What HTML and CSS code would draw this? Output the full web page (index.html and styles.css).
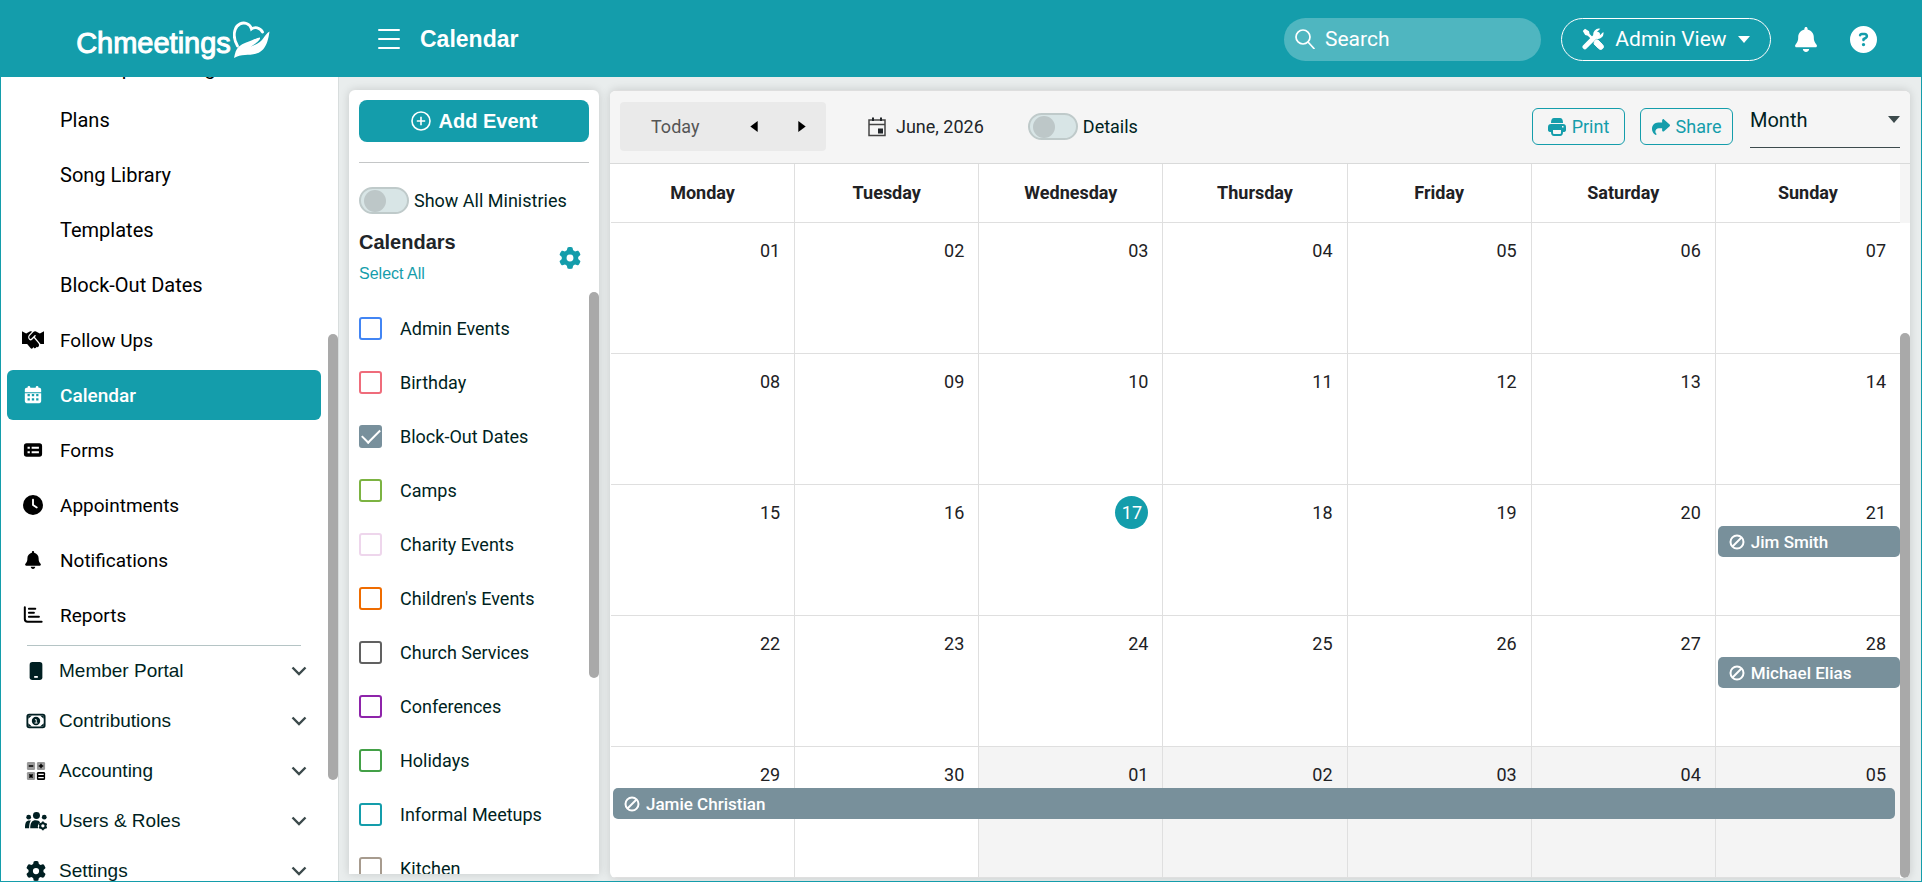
FILE: index.html
```html
<!DOCTYPE html>
<html lang="en">
  <head>
    <meta charset="UTF-8" />
    <meta name="viewport" content="width=device-width, initial-scale=1.0" />
    <title>Calendar - Chmeetings</title>
    <link rel="stylesheet" href="styles.css">
  </head>
  <body>
    <!-- Shared icons -->
    <svg class="sprite" aria-hidden="true">
      <symbol id="i-gear" viewBox="0 0 512 512"><path d="M495.9 166.6c3.2 8.7 .5 18.4-6.4 24.6l-43.3 39.4c1.1 8.3 1.7 16.8 1.7 25.4s-.6 17.1-1.7 25.4l43.3 39.4c6.9 6.2 9.6 15.9 6.4 24.6c-4.4 11.9-9.7 23.3-15.8 34.3l-4.7 8.1c-6.6 11-14 21.4-22.1 31.2c-5.9 7.2-15.7 9.6-24.5 6.8l-55.7-17.7c-13.4 10.3-28.2 18.9-44 25.4l-12.5 57.1c-2 9.1-9 16.3-18.2 17.8c-13.8 2.3-28 3.5-42.5 3.5s-28.7-1.2-42.5-3.5c-9.2-1.5-16.2-8.7-18.2-17.8l-12.5-57.1c-15.8-6.5-30.6-15.1-44-25.4L83.1 425.9c-8.8 2.8-18.6 .3-24.5-6.8c-8.1-9.8-15.5-20.2-22.1-31.2l-4.7-8.1c-6.1-11-11.4-22.4-15.8-34.3c-3.2-8.7-.5-18.4 6.4-24.6l43.3-39.4C64.6 273.1 64 264.6 64 256s.6-17.1 1.7-25.4L22.4 191.2c-6.9-6.2-9.6-15.9-6.4-24.6c4.4-11.9 9.7-23.3 15.8-34.3l4.7-8.1c6.6-11 14-21.4 22.1-31.2c5.9-7.2 15.7-9.6 24.5-6.8l55.7 17.7c13.4-10.3 28.2-18.9 44-25.4l12.5-57.1c2-9.1 9-16.3 18.2-17.8C227.3 1.2 241.5 0 256 0s28.7 1.2 42.5 3.5c9.2 1.5 16.2 8.7 18.2 17.8l12.5 57.1c15.8 6.5 30.6 15.1 44 25.4l55.7-17.7c8.8-2.8 18.6-.3 24.5 6.8c8.1 9.8 15.5 20.2 22.1 31.2l4.7 8.1c6.1 11 11.4 22.4 15.8 34.3zM256 336a80 80 0 1 0 0-160 80 80 0 1 0 0 160z"/></symbol>
      <symbol id="i-bell" viewBox="0 0 448 512"><path d="M224 0c-17.7 0-32 14.3-32 32V51.2C119 66 64 130.6 64 208v18.8c0 47-17.3 92.4-48.5 127.6l-7.4 8.3c-8.4 9.4-10.4 22.9-5.3 34.4S19.4 416 32 416H416c12.6 0 24-7.4 29.2-18.9s3.1-25-5.3-34.4l-7.4-8.3C401.3 319.2 384 273.9 384 226.8V208c0-77.4-55-142-128-156.8V32c0-17.7-14.3-32-32-32zm45.3 493.3c12-12 18.7-28.3 18.7-45.3H224 160c0 17 6.7 33.3 18.7 45.3s28.3 18.7 45.3 18.7s33.3-6.7 45.3-18.7z"/></symbol>
      <symbol id="i-chevron" viewBox="0 0 16 10"><path d="M1.5 1.5 8 8l6.5-6.5" fill="none" stroke="currentColor" stroke-width="2.4"/></symbol>
      <symbol id="i-caret" viewBox="0 0 12 7"><path d="M0 0h12L6 7z"/></symbol>
      <symbol id="i-block" viewBox="0 0 16 16"><g fill="none" stroke="currentColor" stroke-width="2"><circle cx="8" cy="8" r="6.5"/><path d="M3.5 12.5l9-9"/></g></symbol>
    </svg>

    <div class="app">
      <header class="topbar">
        <a class="brand" href="#">
          <span class="brand-name">Chmeetings</span>
          <svg class="brand-heart" viewBox="0 0 37 37">
            <path d="M4.5 25C1 19 .5 13.500 2.200 8.500 4 3 9.500 1 13.500 2.500c3 1.200 4.500 3.500 5 5.500 3-2.300 8.500-2 11 3" fill="none" stroke="currentColor" stroke-width="2.800" stroke-linecap="round"/>
            <path d="M36.500 10.500c-1 7-2.500 13.500-6.500 18-5 5.500-12 5-18 5.500-4 .3-7.500 1-11 3 1-5 2-9 5-11.500 4-3.500 9-4.500 13-6.200 3.500-1.500 7-3 8-2.800.8 2-4.500 6.500-9.500 9.300 6-2.300 11-5.300 13-8.800 1.500-2.500 3.500-5 6-6.500z"/>
          </svg>
        </a>
        <button class="icon-btn menu-btn" aria-label="Toggle menu">
          <svg viewBox="0 0 22 22"><path d="M1 2h20M1 11h20M1 20h20" stroke="currentColor" stroke-width="2" stroke-linecap="round"/></svg>
        </button>
        <h1>Calendar</h1>
        <div class="search">
          <svg viewBox="0 0 20 20"><g fill="none" stroke="currentColor" stroke-width="1.700"><circle cx="8" cy="8" r="7"/><path d="M13 13l6 6.500" stroke-linecap="round"/></g></svg>
          <input type="text" placeholder="Search" aria-label="Search" />
        </div>
        <button class="view-btn">
          <svg class="tools" viewBox="0 0 22 22">
            <path d="M.8 3 3 .8l4 2.500.6 2.700 3 3-1.800 1.800-3-3L3.200 7z"/>
            <path d="M12.300 13.500l1.500-1.700 2.200.3 4.600 4.600a2.700 2.700 0 0 1-3.900 3.900l-4.600-4.600z" stroke="currentColor"/>
            <path d="M2.900 18.900 15.500 6.300" stroke="currentColor" stroke-width="4.800" stroke-linecap="round"/>
            <path d="M18.300.8a5.600 5.600 0 0 0-6.700 7.300l2.700 2.600a5.600 5.600 0 0 0 7-6.800l-3.400 3.300-2.500-.6-.6-2.500z"/>
          </svg>
          Admin View
          <svg class="caret"><use href="#i-caret"/></svg>
        </button>
        <button class="icon-btn bell-btn" aria-label="Notifications"><svg><use href="#i-bell"/></svg></button>
        <button class="icon-btn help-btn" aria-label="Help">
          <svg viewBox="0 0 512 512"><path d="M256 512A256 256 0 1 0 256 0a256 256 0 1 0 0 512zM169.800 165.300c7.900-22.300 29.100-37.300 52.800-37.300h58.300c34.900 0 63.100 28.300 63.100 63.100c0 22.600-12.100 43.500-31.700 54.800L280 264.400c-.2 13-10.900 23.600-24 23.600c-13.300 0-24-10.700-24-24V250.500c0-8.600 4.600-16.500 12.100-20.800l44.300-25.400c4.700-2.700 7.600-7.700 7.600-13.100c0-8.400-6.800-15.100-15.100-15.100H222.600c-3.400 0-6.400 2.100-7.500 5.300l-.4 1.200c-4.400 12.500-18.200 19-30.600 14.600s-19-18.200-14.600-30.600l.4-1.200zM224 352a32 32 0 1 1 64 0 32 32 0 1 1 -64 0z"/></svg>
        </button>
      </header>

      <div class="layout">
        <aside class="sidebar">
          <nav class="side-scroll">
            <div class="side-list">
              <a class="side-item side-sub" href="#"><span class="side-icon"></span>Worship Planning</a>
              <a class="side-item side-sub" href="#"><span class="side-icon"></span>Plans</a>
              <a class="side-item side-sub" href="#"><span class="side-icon"></span>Song Library</a>
              <a class="side-item side-sub" href="#"><span class="side-icon"></span>Templates</a>
              <a class="side-item side-sub" href="#"><span class="side-icon"></span>Block-Out Dates</a>
              <a class="side-item" href="#">
                <svg class="side-icon small" viewBox="0 56 640 400" preserveAspectRatio="none"><path d="M323.400 85.200l-96.800 78.400c-16.100 13-19.200 36.400-7 53.100c12.900 17.800 38 21.300 55.300 7.800l99.300-77.200c7-5.400 17-4.200 22.500 2.800s4.200 17-2.800 22.500l-20.900 16.200L540 345H640V64L520 112 434.800 79c-15.300-9.800-33.200-15-51.400-15c-21.800 0-43 7.500-60 21.200zm22.800 124.400l-51.700 40.200C263 274.300 217.300 268 193.700 235.600c-22.200-30.500-16.600-73.100 12.700-96.800l83.200-67.300c-11.600-4.900-24.100-7.400-36.800-7.400C234 64 215.700 69.600 200 80L120 112 0 64V345H150l97.600 90.400c19.600 17.900 49.900 16.500 67.800-3.100c5.500-6.100 9.200-13.200 11.100-20.600l17 15.600c19.500 17.900 49.900 16.600 67.800-2.900c4.500-4.900 7.800-10.600 9.900-16.500c19.400 13 45.800 10.300 62.100-7.500c17.900-19.500 16.600-49.900-2.900-67.800z"/></svg>
                Follow Ups
              </a>
              <a class="side-item active" href="#">
                <svg class="side-icon" viewBox="0 0 22 22"><path fill-rule="evenodd" d="M5 3V2.500a1.500 1.500 0 0 1 3 0V3h6v-.5a1.500 1.500 0 0 1 3 0V3h1a2 2 0 0 1 2 2v3H2V5a2 2 0 0 1 2-2zM2 9h18v9a2 2 0 0 1-2 2H4a2 2 0 0 1-2-2zm3 1v2.500h2.500V10zm4.700 0v2.500h2.600V10zm4.800 0v2.500H17V10zM5 14.500V17h2.500v-2.500zm4.700 0V17h2.600v-2.500zm4.800 0V17H17v-2.500z"/></svg>
                Calendar
              </a>
              <a class="side-item" href="#">
                <svg class="side-icon" viewBox="0 0 22 22"><rect x="1" y="3.500" width="20" height="15" rx="3"/><path d="M5 8.500h2.500M5 13.500h2.500M9.500 8.500h8M9.500 13.500h8" stroke="#fff" stroke-width="2"/></svg>
                Forms
              </a>
              <a class="side-item" href="#">
                <svg class="side-icon" viewBox="-26 0 564 512"><path d="M256 0a256 256 0 1 1 0 512A256 256 0 1 1 256 0zM232 120V256c0 8 4 15.500 10.700 20l96 64c11 7.400 25.900 4.400 33.300-6.700s4.400-25.900-6.700-33.300L280 243.200V120c0-13.300-10.700-24-24-24s-24 10.700-24 24z"/></svg>
                Appointments
              </a>
              <a class="side-item" href="#"><svg class="side-icon small"><use href="#i-bell"/></svg>Notifications</a>
              <a class="side-item" href="#">
                <svg class="side-icon" viewBox="0 0 22 22"><path d="M2 2.500v13q0 3 3 3h15.500M6.500 4h7M6.500 8.500H12M6.500 13h11" fill="none" stroke="currentColor" stroke-width="2.200" stroke-linecap="round"/></svg>
                Reports
              </a>
              <hr />
              <button class="side-group">
                <svg class="side-icon" viewBox="0 0 22 22"><rect x="4" y="1" width="14" height="20" rx="3"/><path d="M9 17.500h4" stroke="#fff" stroke-width="2"/></svg>
                <span>Member Portal</span><svg class="chevron"><use href="#i-chevron"/></svg>
              </button>
              <button class="side-group">
                <svg class="side-icon" viewBox="0 0 22 22"><rect x="1.500" y="4" width="19" height="14" rx="2" fill="none" stroke="currentColor" stroke-width="2"/><path d="M2.500 8.500V5h4zM19.500 8.500V5h-4zM2.500 13.500V17h4zM19.500 13.500V17h-4z"/><circle cx="11" cy="11" r="4.600"/><path d="M9.800 9.500h1.500V13M9.500 13.200h3.200" fill="none" stroke="#fff"/></svg>
                <span>Contributions</span><svg class="chevron"><use href="#i-chevron"/></svg>
              </button>
              <button class="side-group">
                <svg class="side-icon" viewBox="0 0 22 22">
                  <g fill="#999"><rect x="1" y="1" width="9" height="9" rx="1.500"/><rect x="12" y="1" width="9" height="9" rx="1.500"/><rect x="1" y="12" width="9" height="9" rx="1.500"/></g>
                  <rect x="12" y="12" width="9" height="9" rx="1.500" fill="#000"/>
                  <path d="M3 5.500h5M14 5.500h5M16.500 3v5M3.700 14.700l3.600 3.600M7.300 14.700l-3.600 3.600" stroke="#000" stroke-width="1.600"/>
                  <path d="M13.500 14.800h6M13.500 18.200h6" stroke="#fff" stroke-width="1.400"/>
                </svg>
                <span>Accounting</span><svg class="chevron"><use href="#i-chevron"/></svg>
              </button>
              <button class="side-group">
                <svg class="side-icon" viewBox="0 0 24 20"><circle cx="12.500" cy="4" r="3.800"/><circle cx="4" cy="5.800" r="2.600"/><circle cx="21" cy="5.800" r="2.600"/><path d="M0 18c0-6 1-8.500 5-8.500h1.500Q4.500 12 4.500 18zM5.700 18c0-6 2-8.800 6-8.800 2.500 0 4 .8 4.800 2.300-2 1.500-3 3.500-2.200 6.500z"/><circle cx="19.500" cy="15.300" r="2.900" fill="none" stroke="currentColor" stroke-width="2.200"/><path d="M19.500 10.500v2M19.500 18v2M15.300 13l1.500.9M22.200 16.700l1.500.9M15.300 17.600l1.500-.9M22.200 13.900l1.500-.9" stroke="currentColor" stroke-width="2"/></svg>
                <span>Users &amp; Roles</span><svg class="chevron"><use href="#i-chevron"/></svg>
              </button>
              <button class="side-group">
                <svg class="side-icon"><use href="#i-gear"/></svg>
                <span>Settings</span><svg class="chevron"><use href="#i-chevron"/></svg>
              </button>
            </div>
          </nav>
          <div class="rail side-rail"><div class="thumb"></div></div>
        </aside>

        <section class="filters">
          <div class="filters-top">
            <button class="add-btn">
              <svg viewBox="0 0 20 20"><g fill="none" stroke="currentColor" stroke-width="1.600"><circle cx="10" cy="10" r="9"/><path d="M10 5.800v8.400M5.800 10h8.400"/></g></svg>
              Add Event
            </button>
            <hr />
            <label class="switch-row"><input class="switch" type="checkbox" />Show All Ministries</label>
            <div class="filters-title">
              <div>
                <h2>Calendars</h2>
                <a href="#">Select All</a>
              </div>
              <button class="icon-btn gear-btn" aria-label="Calendar settings"><svg><use href="#i-gear"/></svg></button>
            </div>
          </div>
          <div class="filters-scroll">
            <ul id="calendar-list" class="calendar-list">
              <!-- Calendars will be inserted here -->
            </ul>
            <div class="rail filters-rail"><div class="thumb"></div></div>
          </div>
        </section>

        <main class="calendar">
          <div class="toolbar">
            <div class="nav-group">
              <button class="today-btn">Today</button>
              <button class="arrow-btn" aria-label="Previous"><svg viewBox="0 0 8 12"><path d="M8 0v12L0 6z"/></svg></button>
              <button class="arrow-btn" aria-label="Next"><svg viewBox="0 0 8 12"><path d="M0 0v12l8-6z"/></svg></button>
            </div>
            <button class="date-btn">
              <svg viewBox="0 0 18 20"><path d="M1 3h16v15.500H1zM1 7.500h16" fill="none" stroke="#444" stroke-width="1.500"/><path d="M4 .5h2V4H4zM12 .5h2V4h-2zM10 11.500h5v5h-5z"/></svg>
              June, 2026
            </button>
            <label class="switch-row"><input class="switch" type="checkbox" />Details</label>
            <div class="toolbar-right">
              <button class="outline-btn">
                <svg viewBox="0 0 18 18"><path d="M3 5q0-5 3-5h6q3 0 3 5z"/><path fill-rule="evenodd" d="M3 6h12q3 0 3 3v3q0 2-3 2 0 4-3 4H6q-3 0-3-4-3 0-3-2V9q0-3 3-3zm2 6v3q0 1 1 1h6q1 0 1-1v-3zm9-4v1.500h1.500V8z"/></svg>
                Print
              </button>
              <button class="outline-btn">
                <svg viewBox="0 0 512 512"><path d="M307 34.800c-11.500 5.100-19 16.600-19 29.200v64H176C78.800 128 0 206.800 0 304C0 417.300 81.500 467.900 100.200 478.100c2.500 1.400 5.300 1.900 8.100 1.900c10.900 0 19.700-8.900 19.700-19.700c0-7.500-4.300-14.400-9.800-19.500C108.800 431.900 96 414.400 96 384c0-53 43-96 96-96h96v64c0 12.600 7.400 24.100 19 29.200s25 3 34.400-5.400l160-144c6.700-6.100 10.600-14.700 10.600-23.800s-3.800-17.700-10.600-23.800l-160-144c-9.400-8.500-22.900-10.600-34.400-5.400z"/></svg>
                Share
              </button>
              <div class="view-select">
                <select aria-label="View">
                  <option>Month</option>
                  <option>Week</option>
                  <option>Day</option>
                </select>
                <svg><use href="#i-caret"/></svg>
              </div>
            </div>
          </div>
          <div class="month">
            <table>
              <thead>
                <tr>
                  <th>Monday</th>
                  <th>Tuesday</th>
                  <th>Wednesday</th>
                  <th>Thursday</th>
                  <th>Friday</th>
                  <th>Saturday</th>
                  <th>Sunday</th>
                </tr>
              </thead>
              <tbody id="month-body">
                <!-- Weeks will be inserted here -->
              </tbody>
            </table>
            <div class="rail month-rail"><div class="thumb"></div></div>
          </div>
        </main>
      </div>
    </div>

    <script>
      const calendars = [
        { name: "Admin Events", color: "#4285f4" },
        { name: "Birthday", color: "#ef6c7b" },
        { name: "Block-Out Dates", color: "#78909c", checked: true },
        { name: "Camps", color: "#7cb342" },
        { name: "Charity Events", color: "#eed6ec" },
        { name: "Children's Events", color: "#ef6c00" },
        { name: "Church Services", color: "#616161" },
        { name: "Conferences", color: "#8e24aa" },
        { name: "Holidays", color: "#43a047" },
        { name: "Informal Meetups", color: "#149dab" },
        { name: "Kitchen", color: "#a79b8e" },
      ];

      // Index is the day offset from Monday, June 1
      const events = {
        20: { title: "Jim Smith" },
        27: { title: "Michael Elias" },
        28: { title: "Jamie Christian", week: true },
      };

      const today = 17;
      const daysInMonth = 30;

      function renderCalendars() {
        document.getElementById("calendar-list").innerHTML = calendars
          .map(
            (cal) => `
          <li>
            <label style="--color: ${cal.color}">
              <input type="checkbox" ${cal.checked ? "checked" : ""} />
              ${cal.name}
            </label>
          </li>`
          )
          .join("");
      }

      function createDayCell(index) {
        const other = index >= daysInMonth;
        const day = other ? index - daysInMonth + 1 : index + 1;
        const event = events[index];
        const isToday = !other && day === today;

        return `
          <td class="${other ? "other" : ""}">
            <div class="day"><span class="${isToday ? "today" : ""}">${String(day).padStart(2, "0")}</span></div>
            ${event ? `<a href="#" class="event ${event.week ? "event-week" : ""}"><svg><use href="#i-block"/></svg>${event.title}</a>` : ""}
          </td>`;
      }

      function renderMonth() {
        let rows = "";
        for (let week = 0; week < 5; week++) {
          rows += "<tr>";
          for (let d = 0; d < 7; d++) {
            rows += createDayCell(week * 7 + d);
          }
          rows += "</tr>";
        }
        document.getElementById("month-body").innerHTML = rows;
      }

      renderCalendars();
      renderMonth();
    </script>
  </body>
</html>
```
FILE: styles.css
```css
* {
  margin: 0;
  padding: 0;
  box-sizing: border-box;
}

body {
  font-family: Roboto, sans-serif;
  font-size: 18px;
  color: #001f22;
  background-color: #e9eded;
}

button,
input,
select {
  font: inherit;
  color: inherit;
  background: none;
  border: none;
}

button {
  cursor: pointer;
}

a {
  color: inherit;
  text-decoration: none;
}

svg {
  display: block;
  flex: none;
  fill: currentColor;
}

.sprite {
  display: none;
}

.app {
  display: flex;
  flex-direction: column;
  height: 100vh;
  border: 1px solid #149dab;
  overflow: hidden;
}

/* Top bar */

.topbar {
  display: flex;
  align-items: center;
  flex: none;
  height: 76px;
  padding-right: 44px;
  color: #fff;
  background-color: #149dab;
}

.brand {
  display: flex;
  justify-content: center;
  align-items: center;
  gap: 2px;
  width: 344px;
}

.brand-name {
  padding-top: 8px;
  font-family: "Liberation Sans", sans-serif;
  font-size: 29px;
  line-height: 32px;
  -webkit-text-stroke: 1px #fff;
}

.brand-heart {
  width: 37px;
  height: 37px;
}

.icon-btn svg {
  width: 100%;
  height: 100%;
}

.menu-btn {
  width: 22px;
  height: 22px;
  margin: 0 20px 0 33px;
}

h1 {
  font-family: "Liberation Sans", sans-serif;
  font-size: 23px;
}

.search {
  display: flex;
  align-items: center;
  gap: 10px;
  width: 257px;
  height: 43px;
  margin-left: auto;
  padding: 0 11px;
  border-radius: 22px;
  font-size: 21px;
  background-color: #4fb6c0;
}

.search svg {
  width: 20px;
  height: 20px;
}

.search input {
  flex: 1;
  min-width: 0;
}

.search input::placeholder {
  color: #fff;
}

.view-btn {
  display: flex;
  align-items: center;
  justify-content: center;
  gap: 11px;
  width: 210px;
  height: 43px;
  margin: 0 24px 0 20px;
  border: 1px solid #fff;
  border-radius: 22px;
  font-size: 21px;
}

.tools {
  width: 22px;
  height: 22px;
}

.caret {
  width: 12px;
  height: 7px;
}

.bell-btn {
  width: 22px;
  height: 25px;
}

.help-btn {
  width: 27px;
  height: 27px;
  margin-left: 33px;
}

.layout {
  display: flex;
  flex: 1;
  min-height: 0;
}

/* Fake scrollbars */

.rail {
  flex: none;
  width: 10px;
}

.thumb {
  border-radius: 5px;
  background-color: #a9a9a9;
}

/* Sidebar */

.sidebar {
  display: flex;
  flex: none;
  width: 338px;
  border-right: 1px solid #d8dddd;
  background-color: #fff;
}

.side-scroll {
  flex: 1;
  overflow: hidden;
}

.side-list {
  margin: -34px 7px 0 6px;
}

.side-item,
.side-group {
  display: flex;
  align-items: center;
  height: 50px;
}

.side-item {
  gap: 16px;
  margin-bottom: 5px;
  padding-left: 15px;
  border-radius: 6px;
  font-size: 19px;
  color: #000;
}

.side-item:first-child {
  margin-bottom: 2px;
}

.side-sub {
  font-size: 20px;
}

.side-item.active {
  color: #fff;
  font-weight: 500;
  background-color: #149dab;
}

.side-icon {
  width: 22px;
  height: 20px;
}

.side-icon.small {
  height: 18px;
}

.side-list hr {
  margin: 0 20px;
  border: none;
  border-top: 1px solid #b5c4c5;
}

.side-group {
  gap: 12px;
  width: 100%;
  padding: 0 14px 0 18px;
  font-family: "Liberation Sans", sans-serif;
  font-size: 19px;
}

.chevron {
  width: 16px;
  height: 10px;
  margin-left: auto;
  color: #3c4a4c;
}

.side-rail {
  padding-top: 257px;
}

.side-rail .thumb {
  height: 446px;
}

/* Calendar filters */

.filters {
  display: flex;
  flex-direction: column;
  flex: none;
  width: 250px;
  margin: 13px 11px 7px 10px;
  border-radius: 6px 6px 0 0;
  background-color: #fff;
  box-shadow: 0 0 10px rgba(0, 0, 0, 0.15);
}

.filters-top {
  padding: 10px 10px 7px;
}

.add-btn {
  display: flex;
  align-items: center;
  justify-content: center;
  gap: 8px;
  width: 100%;
  height: 42px;
  border-radius: 8px;
  font-family: "Liberation Sans", sans-serif;
  font-size: 20px;
  font-weight: bold;
  color: #fff;
  background-color: #149dab;
}

.add-btn svg {
  width: 20px;
  height: 20px;
}

.filters hr {
  margin: 20px 0 24px;
  border: none;
  border-top: 1px solid #c4c6c7;
}

.switch-row {
  display: flex;
  align-items: center;
  gap: 5px;
}

.switch {
  appearance: none;
  width: 50px;
  height: 27px;
  padding: 1px 3px;
  border: 2px solid #bfcaca;
  border-radius: 14px;
  background-color: #d8e5e6;
}

.switch::before {
  content: "";
  display: block;
  width: 22px;
  height: 22px;
  border-radius: 50%;
  background-color: #bdc7c8;
}

.filters-title {
  display: flex;
  align-items: center;
  justify-content: space-between;
  margin-top: 16px;
  padding-right: 8px;
  font-family: "Liberation Sans", sans-serif;
}

.filters-title h2 {
  margin-bottom: 9px;
  font-size: 20px;
  line-height: 24px;
  color: #212529;
}

.filters-title a {
  display: block;
  font-size: 16px;
  line-height: 22px;
  color: #149dab;
}

.gear-btn {
  width: 22px;
  height: 22px;
  color: #149dab;
}

.filters-scroll {
  display: flex;
  flex: 1;
  min-height: 0;
  overflow: hidden;
}

.calendar-list {
  flex: 1;
  padding: 9px 0 0 10px;
  list-style: none;
}

.calendar-list label {
  display: flex;
  align-items: center;
  gap: 18px;
  height: 54px;
}

.calendar-list input {
  appearance: none;
  display: grid;
  place-items: center;
  width: 23px;
  height: 23px;
  border: 2px solid var(--color);
  border-radius: 3px;
}

.calendar-list input:checked {
  background-color: var(--color);
}

.calendar-list input:checked::before {
  content: "";
  width: 16px;
  height: 8px;
  margin-bottom: 4px;
  border: solid #fff;
  border-width: 0 0 2px 2px;
  transform: rotate(-45deg);
}

.filters-rail .thumb {
  height: 386px;
}

/* Calendar */

.calendar {
  display: flex;
  flex-direction: column;
  flex: 1;
  min-width: 0;
  margin: 13px 11px 3px 0;
  border-top: 1px solid #dedede;
  border-radius: 6px;
  background-color: #fff;
  box-shadow: 0 0 10px rgba(0, 0, 0, 0.15);
  overflow: hidden;
}

.toolbar {
  display: flex;
  align-items: center;
  flex: none;
  height: 73px;
  padding: 0 10px 1px;
  border-bottom: 1px solid #d9dada;
  background-color: #f5f5f5;
}

.nav-group {
  display: flex;
  align-items: center;
  width: 206px;
  height: 49px;
  padding-left: 31px;
  border-radius: 4px;
  background-color: #eaeaea;
}

.today-btn {
  width: 79px;
  text-align: left;
  color: #555;
}

.arrow-btn {
  display: flex;
  justify-content: center;
  width: 48px;
  color: #000;
}

.arrow-btn svg {
  width: 8px;
  height: 11px;
}

.date-btn {
  display: flex;
  align-items: center;
  gap: 10px;
  margin: 0 44px 0 42px;
  color: #212529;
}

.date-btn svg {
  width: 18px;
  height: 20px;
}

.toolbar-right {
  display: flex;
  align-items: center;
  gap: 15px;
  margin-left: auto;
}

.outline-btn {
  display: flex;
  align-items: center;
  justify-content: center;
  gap: 6px;
  width: 93px;
  height: 37px;
  border: 1px solid #149dab;
  border-radius: 6px;
  color: #149dab;
}

.outline-btn svg {
  width: 18px;
  height: 18px;
}

.view-select {
  display: flex;
  align-items: center;
  width: 150px;
  height: 42px;
  margin-left: 2px;
  padding-bottom: 13px;
  border-bottom: 1px solid #3c4a4c;
  font-size: 20px;
}

.view-select select {
  appearance: none;
  flex: 1;
}

.view-select svg {
  width: 12px;
  height: 7px;
  color: #3c4a4c;
}

.month {
  display: flex;
  flex: 1;
  min-height: 0;
  padding-left: 1px;
}

table {
  flex: 1;
  width: 100%;
  height: 100%;
  border-collapse: separate;
  border-spacing: 0;
  table-layout: fixed;
  color: #212124;
}

th,
td {
  border-right: 1px solid #dfdfdf;
  border-bottom: 1px solid #dfdfdf;
}

th:last-child,
td:last-child {
  border-right: none;
}

th {
  height: 59px;
  padding-bottom: 2px;
  font-weight: 700;
}

td {
  position: relative;
  padding-right: 14px;
  vertical-align: top;
}

td.other {
  background-color: #f4f4f4;
}

.day {
  display: flex;
  justify-content: flex-end;
  margin-top: 11px;
}

.day span {
  line-height: 33px;
}

.day .today {
  width: 33px;
  border-radius: 50%;
  text-align: center;
  color: #fff;
  background-color: #149dab;
}

.event {
  position: absolute;
  top: 41px;
  left: 2px;
  right: 0;
  z-index: 1;
  display: flex;
  align-items: center;
  gap: 6px;
  height: 31px;
  padding-left: 11px;
  border-radius: 5px;
  font-size: 17px;
  font-weight: 500;
  color: #fff;
  background-color: #78909b;
}

.event svg {
  width: 16px;
  height: 16px;
}

.event-week {
  width: 700%;
}

.month-rail {
  border-top: 59px solid #f5f5f5;
  padding-top: 110px;
}

.month-rail .thumb {
  height: 100%;
}
```
